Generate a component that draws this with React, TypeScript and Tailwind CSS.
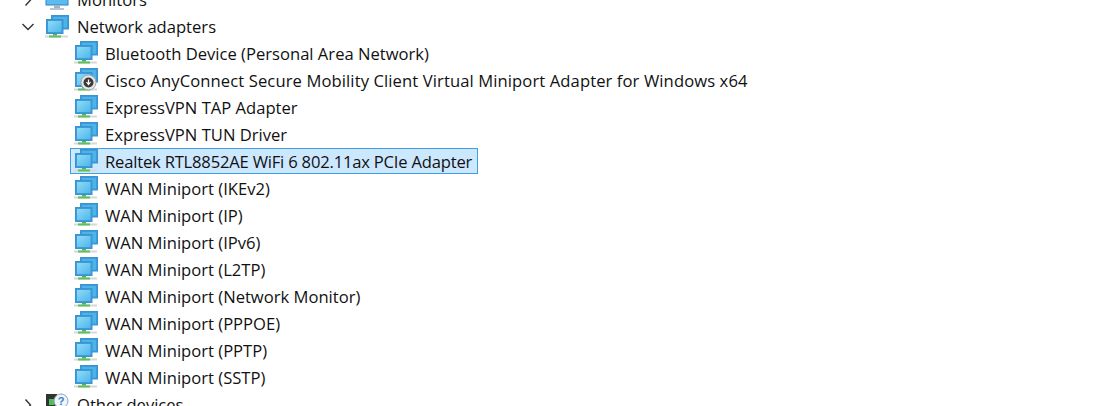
const adapters = [
  "Bluetooth Device (Personal Area Network)",
  "Cisco AnyConnect Secure Mobility Client Virtual Miniport Adapter for Windows x64",
  "ExpressVPN TAP Adapter",
  "ExpressVPN TUN Driver",
  "Realtek RTL8852AE WiFi 6 802.11ax PCIe Adapter",
  "WAN Miniport (IKEv2)",
  "WAN Miniport (IP)",
  "WAN Miniport (IPv6)",
  "WAN Miniport (L2TP)",
  "WAN Miniport (Network Monitor)",
  "WAN Miniport (PPPOE)",
  "WAN Miniport (PPTP)",
  "WAN Miniport (SSTP)",
];

function Chevron({ open }: { open?: boolean }) {
  return (
    <svg width="16" height="16" viewBox="0 0 16 16" fill="none" stroke="#333" strokeWidth="1.4">
      {open ? <path d="M2.5 5 L8 10.5 L13.5 5" /> : <path d="M5.5 2.5 L10.5 8 L5.5 13.5" />}
    </svg>
  );
}

function NetworkIcon({ disabled }: { disabled?: boolean }) {
  return (
    <svg width="24" height="24" viewBox="0 0 24 24" className="shrink-0">
      <defs>
        <linearGradient id="screen" x1="0" y1="0" x2="1" y2="1">
          <stop offset="0" stopColor="#8edcf8" />
          <stop offset="1" stopColor="#4fb6ea" />
        </linearGradient>
      </defs>
      <rect x="6.5" y="0.5" width="17" height="13.5" fill="#3f9bd8" stroke="#3a93d2" />
      <rect x="8" y="2" width="14" height="10.5" fill="#4db4ea" />
      <rect x="1.5" y="4.5" width="16.5" height="14" fill="#3f9bd8" stroke="#3a93d2" />
      <rect x="3" y="6" width="13.5" height="11" fill="url(#screen)" />
      <rect x="8" y="19" width="4" height="2" fill="#4fb54f" />
      <rect x="0" y="20.5" width="23" height="2" fill="#d8d8d8" />
      <rect x="4" y="20.5" width="12" height="2" fill="#5cc05c" />
      {disabled && (
        <g>
          <circle cx="14.5" cy="14.5" r="7.5" fill="#e8e8e8" stroke="#a6a6a6" />
          <circle cx="14.5" cy="14.5" r="5" fill="#3a3a3a" />
          <path d="M14.5 11.5v4M12.5 14l2 2.5 2-2.5" stroke="#fff" strokeWidth="1.2" fill="none" />
        </g>
      )}
    </svg>
  );
}

function MonitorIcon() {
  return (
    <svg width="24" height="24" viewBox="0 0 24 24" className="shrink-0">
      <rect x="1" y="2" width="22" height="15" fill="#5cbcf0" stroke="#2b86c5" />
      <rect x="9" y="17" width="6" height="3" fill="#9fb4c4" />
      <rect x="5" y="20" width="14" height="2" fill="#b8c4ce" />
    </svg>
  );
}

function OtherIcon() {
  return (
    <svg width="24" height="24" viewBox="0 0 24 24" className="shrink-0">
      <rect x="1" y="1" width="11" height="22" fill="#333" />
      <rect x="4" y="6" width="5" height="6" fill="#4cc05a" />
      <circle cx="16" cy="8" r="7" fill="#eef4fa" stroke="#8fa5b8" />
      <text x="16" y="12" textAnchor="middle" fontSize="11" fontWeight="700" fill="#3b82c4" fontFamily="Liberation Sans, sans-serif">?</text>
    </svg>
  );
}

function TopRow({ label, open, icon }: { label: string; open?: boolean; icon: React.ReactNode }) {
  return (
    <div className="flex h-[27px] items-center pl-[20px]">
      <span className="w-[16px]"><Chevron open={open} /></span>
      <span className="ml-[9px]">{icon}</span>
      <span className="ml-[8px] whitespace-nowrap pt-[1px]">{label}</span>
    </div>
  );
}

function AdapterRow({ label, selected, disabled }: { label: string; selected?: boolean; disabled?: boolean }) {
  return (
    <div className="h-[27px] pl-[70px]">
      <div
        className={`flex h-[26px] items-center gap-[7px] border pl-[3px] pr-[5px] ${
          selected ? "w-[408px] border-[#3f9fe0] bg-[#cce8ff]" : "border-transparent"
        }`}
      >
        <NetworkIcon disabled={disabled} />
        <span
          className={`whitespace-nowrap pt-[2px] ${
            selected ? "tracking-[-0.2px]" : disabled ? "tracking-[0.1px]" : ""
          }`}
        >
          {label}
        </span>
      </div>
    </div>
  );
}

export default function App() {
  return (
    <div className="h-[406px] w-[1093px] overflow-hidden bg-white font-['Open_Sans','Noto_Sans',sans-serif] text-[16.6px] text-[#111]">
      <div className="-mt-[14px]">
        <TopRow label="Monitors" icon={<MonitorIcon />} />
        <TopRow label="Network adapters" open icon={<NetworkIcon />} />
        {adapters.map((name, i) => (
          <AdapterRow key={name} label={name} selected={i === 4} disabled={i === 1} />
        ))}
        <TopRow label="Other devices" icon={<OtherIcon />} />
      </div>
    </div>
  );
}
